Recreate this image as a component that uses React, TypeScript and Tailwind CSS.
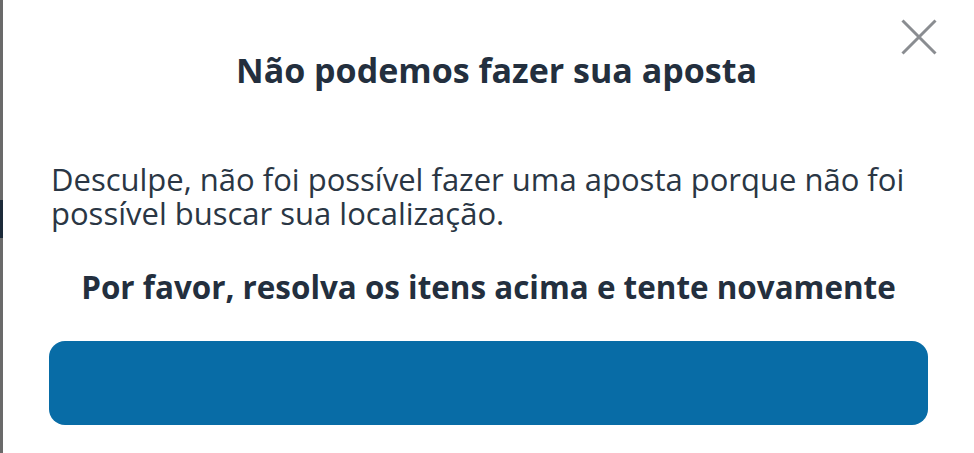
export default function App() {
  return (
    <div
      className="flex h-[453px] w-[974px] overflow-hidden bg-white"
      style={{ fontFamily: '"Open Sans", "Noto Sans", sans-serif' }}
    >
      {/* left page edge */}
      <div className="flex w-[3px] shrink-0 flex-col bg-[#6a6a6a]">
        <div className="h-[200px]" />
        <div className="h-[38px] bg-[#1c2a39]" />
      </div>

      <div className="relative flex flex-1 flex-col px-[46px] text-[#232f3e]">
        <button
          type="button"
          aria-label="Fechar"
          className="absolute right-[37px] top-[19px] h-[36px] w-[36px]"
        >
          <svg viewBox="0 0 36 36" className="h-full w-full" fill="none">
            <path d="M1.5 1.5 L34.5 34.5 M34.5 1.5 L1.5 34.5" stroke="#8a8d91" strokeWidth="3" />
          </svg>
        </button>

        <h2 className="mt-[47px] pl-[16px] text-center text-[34px] font-bold leading-[46px]">
          Não podemos fazer sua aposta
        </h2>

        <p className="mt-[69px] pl-[2px] text-[31px] leading-[34px] text-[#2a3644]">
          Desculpe, não foi possível fazer uma aposta porque não foi possível buscar sua localização.
        </p>

        <p className="mt-[37px] text-center text-[31.4px] font-bold leading-[40px]">
          Por favor, resolva os itens acima e tente novamente
        </p>

        <div className="mt-[34px] h-[84px] w-full rounded-[16px] bg-[#086ca6]" />
      </div>
    </div>
  );
}
